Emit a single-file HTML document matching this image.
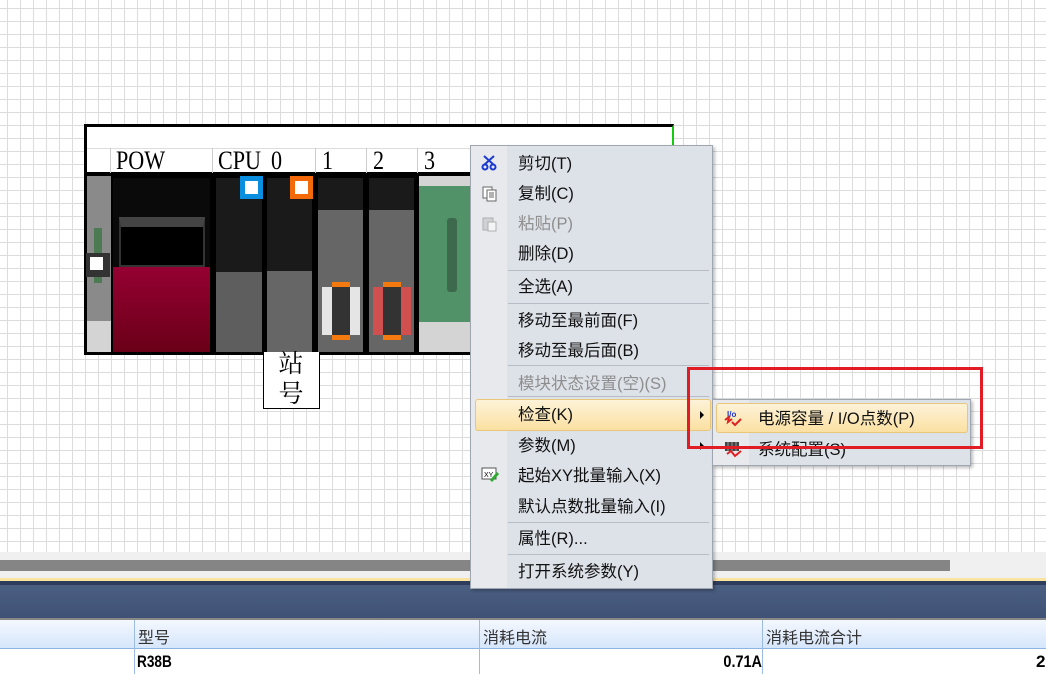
<!DOCTYPE html>
<html><head><meta charset="utf-8"><style>
*{margin:0;padding:0;box-sizing:border-box}
body{width:1046px;height:674px;position:relative;overflow:hidden;background:#fff;font-family:"Liberation Sans","Noto Sans CJK SC",sans-serif}
.a{position:absolute}
#grid{left:0;top:0;width:1046px;height:552px;background-color:#fff;
background-image:linear-gradient(to right,#dcdcdc 1px,transparent 1px),linear-gradient(to bottom,#dcdcdc 1px,transparent 1px);
background-size:13px 13px;background-position:7px 8px}
.lbl{font-family:"Liberation Serif","Noto Serif CJK SC",serif;font-size:26px;color:#000;top:146px;line-height:30px;transform:scaleX(.85);transform-origin:left}
.menu{font-size:16.5px;color:#111}
.it{position:absolute;left:47px;line-height:20px}
.sep{position:absolute;left:37px;right:3px;height:1px;background:#b6bcc6}
.dis{color:#8e8e8e}
.th{position:absolute;top:624px;font-family:"Liberation Sans","Noto Sans CJK SC",sans-serif;font-size:16px;color:#333}
</style></head><body>
<div id="grid" class="a"></div>
<!-- rack -->
<div class="a" style="left:84px;top:124px;width:590px;height:231px;background:#fff;border:3px solid #000;border-right:2px solid #1c1"></div>
<div class="a" style="left:87px;top:148px;width:586px;height:1px;background:#ddd"></div>
<div class="a" style="left:87px;top:172px;width:586px;height:4px;background:#000"></div>
<div class="a" style="left:110px;top:148px;width:1px;height:25px;background:#ccc"></div>
<div class="a" style="left:212px;top:148px;width:1px;height:25px;background:#ccc"></div>
<div class="a" style="left:315px;top:148px;width:1px;height:25px;background:#ccc"></div>
<div class="a" style="left:366px;top:148px;width:1px;height:25px;background:#ccc"></div>
<div class="a" style="left:417px;top:148px;width:1px;height:25px;background:#ccc"></div>
<div class="a lbl" style="left:116px">POW</div>
<div class="a lbl" style="left:218px">CPU</div>
<div class="a lbl" style="left:271px">0</div>
<div class="a lbl" style="left:322px">1</div>
<div class="a lbl" style="left:373px">2</div>
<div class="a lbl" style="left:424px">3</div>
<div class="a" style="left:87px;top:176px;width:586px;height:176px;background:#d4d4d4"></div>
<div class="a" style="left:87px;top:176px;width:24px;height:145px;background:#8a8a8a"></div>
<div class="a" style="left:94px;top:228px;width:8px;height:55px;background:#4c7a52"></div>
<div class="a" style="left:86px;top:253px;width:24px;height:24px;background:#333"></div>
<div class="a" style="left:90px;top:257px;width:13px;height:13px;background:#fff"></div>
<div class="a" style="left:111px;top:176px;width:308px;height:177px;background:#000"></div>
<div class="a" style="left:113px;top:178px;width:97px;height:89px;background:#0a0a0a"></div>
<div class="a" style="left:119px;top:217px;width:86px;height:50px;background:#000;border:2px solid #333;border-top:10px solid #444"></div>
<div class="a" style="left:113px;top:267px;width:97px;height:85px;background:linear-gradient(#950032,#6a0018)"></div>
<div class="a" style="left:216px;top:178px;width:46px;height:174px;background:#1a1a1a"></div>
<div class="a" style="left:216px;top:272px;width:46px;height:80px;background:#5e5e5e"></div>
<div class="a" style="left:240px;top:176px;width:23px;height:23px;background:#0a8ee0"></div>
<div class="a" style="left:245px;top:181px;width:13px;height:13px;background:#fff"></div>
<div class="a" style="left:267px;top:178px;width:45px;height:174px;background:#1a1a1a"></div>
<div class="a" style="left:267px;top:271px;width:45px;height:81px;background:#666"></div>
<div class="a" style="left:290px;top:176px;width:23px;height:23px;background:#f46a0a"></div>
<div class="a" style="left:295px;top:181px;width:13px;height:13px;background:#fff"></div>
<div class="a" style="left:318px;top:178px;width:45px;height:174px;background:#666;border-top:32px solid #1a1a1a"></div>
<div class="a" style="left:322px;top:287px;width:38px;height:48px;background:#e5e5e5"></div>
<div class="a" style="left:332px;top:282px;width:18px;height:58px;background:#333;border-top:5px solid #f47a10;border-bottom:5px solid #f47a10"></div>
<div class="a" style="left:369px;top:178px;width:45px;height:174px;background:#666;border-top:32px solid #1a1a1a"></div>
<div class="a" style="left:373px;top:287px;width:38px;height:48px;background:#d05050"></div>
<div class="a" style="left:383px;top:282px;width:18px;height:58px;background:#333;border-top:5px solid #f47a10;border-bottom:5px solid #f47a10"></div>
<div class="a" style="left:419px;top:186px;width:52px;height:136px;background:#519268"></div>
<div class="a" style="left:447px;top:218px;width:10px;height:74px;background:#3d6a4c;border-radius:3px"></div>
<div class="a" style="left:263px;top:352px;width:57px;height:57px;background:#fff;border:1px solid #000;border-top:none"></div>
<div class="a" style="left:274px;top:347px;font-family:'Noto Serif CJK SC',serif;font-size:25px;line-height:30px;width:34px;text-align:center">站<br>号</div>
<!-- bottom -->
<div class="a" style="left:0;top:552px;width:1046px;height:26px;background:#f0f0f0"></div>
<div class="a" style="left:0;top:560px;width:950px;height:11px;background:#858585"></div>
<div class="a" style="left:0;top:578px;width:1046px;height:3px;background:#fbe3a0"></div>
<div class="a" style="left:0;top:581px;width:1046px;height:4px;background:#2e3d5c"></div>
<div class="a" style="left:0;top:585px;width:1046px;height:33px;background:linear-gradient(#4b5f82,#3f5275)"></div>
<div class="a" style="left:0;top:618px;width:1046px;height:2px;background:#888"></div>
<div class="a" style="left:0;top:620px;width:1046px;height:29px;background:linear-gradient(#f4f8ff,#d6e6fb);border-bottom:1px solid #90b4e0"></div>
<div class="a" style="left:134px;top:620px;width:1px;height:54px;background:#9cbce4"></div>
<div class="a" style="left:479px;top:620px;width:1px;height:54px;background:#9cbce4"></div>
<div class="a" style="left:762px;top:620px;width:1px;height:54px;background:#9cbce4"></div>
<div class="th" style="left:138px">型号</div>
<div class="th" style="left:483px">消耗电流</div>
<div class="th" style="left:766px">消耗电流合计</div>
<div class="a" style="left:137px;top:652px;font-size:17px;font-weight:bold;transform:scaleX(.8);transform-origin:left">R38B</div>
<div class="a" style="left:662px;top:652px;width:100px;text-align:right;font-size:17px;font-weight:bold;transform:scaleX(.85);transform-origin:right">0.71A</div>
<div class="a" style="left:1036px;top:652px;font-size:17px;font-weight:bold">2</div>
<!-- menu -->
<div class="a menu" style="left:470px;top:145px;width:243px;height:444px;background:#dde1e8;border:1px solid #a0a6b0;box-shadow:2px 2px 3px rgba(0,0,0,.25)">
<div class="a" style="left:0;top:0;width:36px;height:442px;background:#e7e9ed"></div>
<div class="a" style="left:4px;top:253px;width:236px;height:32px;background:linear-gradient(#fdf3d8,#fbe0a2);border:1px solid #e8c77a;border-radius:3px"></div>
<svg class="a" style="left:10px;top:9px" width="18" height="16"><path d="M3 1 L13 10 M13 1 L3 10" stroke="#1a3ad0" stroke-width="2"/><circle cx="4" cy="12" r="2.5" fill="none" stroke="#1a3ad0" stroke-width="2"/><circle cx="12" cy="12" r="2.5" fill="none" stroke="#1a3ad0" stroke-width="2"/></svg>
<svg class="a" style="left:11px;top:40px" width="16" height="16"><rect x="1" y="1" width="9" height="11" fill="#fff" stroke="#666"/><rect x="5" y="4" width="9" height="11" fill="#fff" stroke="#666"/><path d="M7 7h5M7 9h5M7 11h5" stroke="#666"/></svg>
<svg class="a" style="left:11px;top:70px" width="16" height="16" opacity=".5"><rect x="1" y="2" width="10" height="12" fill="#bbb" stroke="#777"/><rect x="6" y="6" width="8" height="9" fill="#fff" stroke="#777"/></svg>
<svg class="a" style="left:10px;top:321px" width="20" height="16"><rect x="1" y="1" width="14" height="11" fill="#fff" stroke="#555"/><text x="3" y="10" font-size="7" font-family="Liberation Sans">XY</text><path d="M10 14 L17 6" stroke="#3a3" stroke-width="3"/></svg>
<div class="it" style="top:8px">剪切(T)</div>
<div class="it" style="top:38px">复制(C)</div>
<div class="it dis" style="top:68px">粘贴(P)</div>
<div class="it" style="top:98px">删除(D)</div>
<div class="sep" style="top:124px"></div>
<div class="it" style="top:131px">全选(A)</div>
<div class="sep" style="top:157px"></div>
<div class="it" style="top:165px">移动至最前面(F)</div>
<div class="it" style="top:195px">移动至最后面(B)</div>
<div class="sep" style="top:219px"></div>
<div class="it dis" style="top:228px">模块状态设置(空)(S)</div>
<div class="sep" style="top:250px"></div>
<div class="it" style="top:259px">检查(K)</div>
<div class="a" style="left:229px;top:265px;width:0;height:0;border-left:4px solid #000;border-top:4px solid transparent;border-bottom:4px solid transparent"></div>
<div class="it" style="top:290px">参数(M)</div>
<div class="a" style="left:229px;top:296px;width:0;height:0;border-left:4px solid #000;border-top:4px solid transparent;border-bottom:4px solid transparent"></div>
<div class="it" style="top:320px">起始XY批量输入(X)</div>
<div class="it" style="top:351px">默认点数批量输入(I)</div>
<div class="sep" style="top:376px"></div>
<div class="it" style="top:383px">属性(R)...</div>
<div class="sep" style="top:408px"></div>
<div class="it" style="top:416px">打开系统参数(Y)</div>
</div>
<!-- submenu -->
<div class="a menu" style="left:712px;top:399px;width:259px;height:67px;background:#dde1e8;border:1px solid #a0a6b0;box-shadow:2px 2px 3px rgba(0,0,0,.25)">
<div class="a" style="left:0;top:0;width:36px;height:65px;background:#e7e9ed"></div>
<div class="a" style="left:3px;top:3px;width:252px;height:30px;background:linear-gradient(#fdf3d8,#fbe0a2);border:1px solid #e8c77a;border-radius:3px"></div>
<svg class="a" style="left:10px;top:9px" width="20" height="18"><text x="4" y="8" font-size="8" font-weight="bold" fill="#1a3ad0" font-family="Liberation Sans">I/o</text><path d="M2 11 L6 8 L5 13 L9 10 M9 13 L12 16 L18 10" stroke="#e02020" stroke-width="2" fill="none"/></svg>
<svg class="a" style="left:10px;top:40px" width="20" height="18"><rect x="2" y="2" width="14" height="9" fill="#444"/><path d="M5 2v9M9 2v9M13 2v9" stroke="#999"/><path d="M4 14 L8 11 L12 16 L18 11" stroke="#e02020" stroke-width="2" fill="none"/></svg>
<div class="it" style="left:45px;top:9px">电源容量 / I/O点数(P)</div>
<div class="it" style="left:45px;top:40px">系统配置(S)</div>
</div>
<div class="a" style="left:687px;top:367px;width:296px;height:82px;border:3px solid #e21c24"></div>
</body></html>
